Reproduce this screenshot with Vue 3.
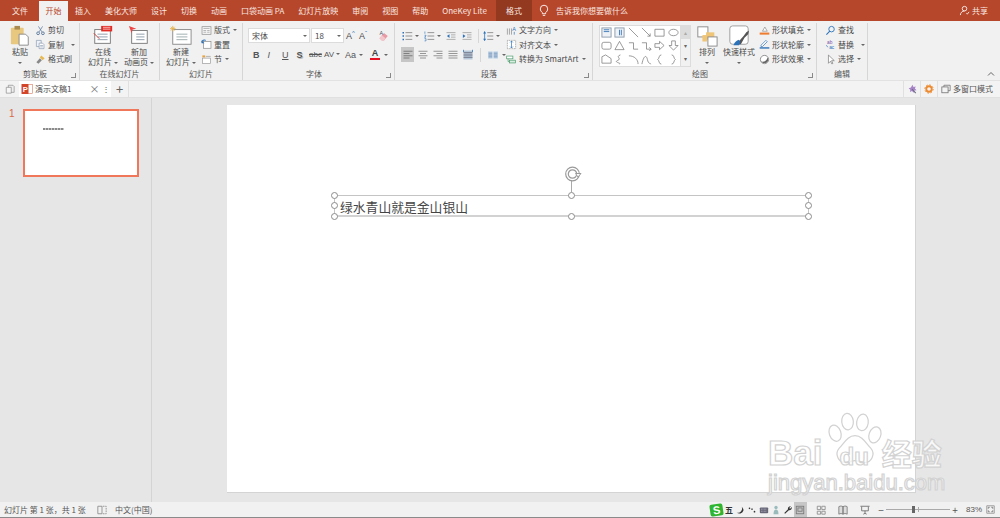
<template>
  <div class="app">
    <div class="titlebar">
      <div
        v-for="t in tabs"
        :key="t"
        class="tab"
        :class="{ active: t === '开始', context: t === '格式' }"
      >
        {{ t }}
      </div>
      <svg class="bulb" viewBox="0 0 12 16" v-html="icons.bulb"></svg>
      <div class="tell">告诉我你想要做什么</div>
      <div class="share">
        <svg viewBox="0 0 12 12" v-html="icons.user"></svg>
        共享
      </div>
    </div>

    <div class="ribbon">
      <div class="group" style="width: 80px">
        <div class="body pad-clip">
          <div class="big w22">
            <svg viewBox="0 0 24 24" v-html="icons.paste"></svg>
            <span>粘贴</span>
            <i class="caret"></i>
          </div>
          <div class="stack">
            <div v-for="r in clipRows" :key="r.t" class="row">
              <svg viewBox="0 0 16 16" v-html="icons[r.i]"></svg>{{ r.t }}
              <i v-if="r.c" class="caret" :class="r.far ? 'far' : 'near'"></i>
            </div>
          </div>
        </div>
        <div class="label off">剪贴板<i class="launcher"></i></div>
      </div>

      <div class="group" style="width: 80px">
        <div class="body pad-online">
          <div class="big w36">
            <svg viewBox="0 0 24 24" v-html="icons.online"></svg>
            <span>在线</span>
            <span>幻灯片 <i class="caret"></i></span>
          </div>
          <div class="big w36">
            <svg viewBox="0 0 24 24" v-html="icons.anim"></svg>
            <span>新加</span>
            <span>动画页 <i class="caret"></i></span>
          </div>
        </div>
        <div class="label">在线幻灯片</div>
      </div>

      <div class="group" style="width: 83px">
        <div class="body pad-slide">
          <div class="big w36">
            <svg viewBox="0 0 24 24" v-html="icons.newslide"></svg>
            <span>新建</span>
            <span>幻灯片 <i class="caret"></i></span>
          </div>
          <div class="stack">
            <div v-for="r in slideRows" :key="r.t" class="row">
              <svg viewBox="0 0 16 16" v-html="icons[r.i]"></svg>{{ r.t }}
              <i v-if="r.c" class="caret near"></i>
            </div>
          </div>
        </div>
        <div class="label">幻灯片</div>
      </div>

      <div class="group" style="width: 152px">
        <div class="body font-body">
          <div class="tools">
            <div class="combo wide">宋体<i class="caret"></i></div>
            <div class="combo narrow">18<i class="caret"></i></div>
            <span class="glyph grow">A<sup>^</sup></span>
            <span class="glyph shrink">A<sup>ˇ</sup></span>
            <svg class="clear" viewBox="0 0 16 16" v-html="icons.eraser"></svg>
          </div>
          <div class="tools fmt">
            <b>B</b>
            <em>I</em>
            <u>U</u>
            <b class="shadow">S</b>
            <s class="abc">abc</s>
            <span class="av">AV <i class="caret"></i></span>
            <span class="aa">Aa <i class="caret"></i></span>
            <span class="red">A</span><i class="caret"></i>
          </div>
        </div>
        <div class="label off">字体<i class="launcher"></i></div>
      </div>

      <div class="group" style="width: 198px">
        <div class="body para-body">
          <div class="para-left">
            <div class="tools para-top">
              <svg viewBox="0 0 16 16" v-html="icons.bullets"></svg><i class="caret"></i>
              <svg class="gap-l" viewBox="0 0 16 16" v-html="icons.numbers"></svg><i class="caret"></i>
              <svg class="gap-l" viewBox="0 0 16 16" v-html="icons.outdent"></svg>
              <svg class="gap-s" viewBox="0 0 16 16" v-html="icons.indent"></svg>
              <span class="vsep"></span>
              <svg viewBox="0 0 16 16" v-html="icons.spacing"></svg><i class="caret"></i>
            </div>
            <div class="tools para-bottom">
              <span class="on"><svg viewBox="0 0 16 16" v-html="icons.alignL"></svg></span>
              <svg viewBox="0 0 16 16" v-html="icons.alignC"></svg>
              <svg viewBox="0 0 16 16" v-html="icons.alignR"></svg>
              <svg viewBox="0 0 16 16" v-html="icons.alignJ"></svg>
              <svg viewBox="0 0 16 16" v-html="icons.alignD"></svg>
              <span class="vsep"></span>
              <svg viewBox="0 0 16 16" v-html="icons.columns"></svg><i class="caret"></i>
            </div>
          </div>
          <div class="stack">
            <div v-for="r in paraRows" :key="r.t" class="row">
              <svg viewBox="0 0 16 16" v-html="icons[r.i]"></svg>{{ r.t }}
              <i class="caret near"></i>
            </div>
          </div>
        </div>
        <div class="label off">段落<i class="launcher"></i></div>
      </div>

      <div class="group" style="width: 224px">
        <div class="body draw-body">
          <div class="gallery">
            <div class="cells">
              <svg v-for="(s, n) in shapes" :key="n" viewBox="0 0 12 12" v-html="s"></svg>
            </div>
            <div class="scroller">
              <span class="muted">▴</span>
              <span>▾</span>
              <span>▾</span>
            </div>
          </div>
          <div class="big w24">
            <svg viewBox="0 0 24 24" v-html="icons.arrange"></svg>
            <span>排列</span>
            <i class="caret"></i>
          </div>
          <div class="big w36">
            <svg viewBox="0 0 24 24" v-html="icons.quick"></svg>
            <span>快速样式</span>
            <i class="caret"></i>
          </div>
          <div class="stack">
            <div v-for="r in drawRows" :key="r.t" class="row">
              <svg viewBox="0 0 16 16" v-html="icons[r.i]"></svg>{{ r.t }}
              <i class="caret near"></i>
            </div>
          </div>
        </div>
        <div class="label off">绘图<i class="launcher"></i></div>
      </div>

      <div class="group" style="width: 51px">
        <div class="body pad-edit">
          <div class="stack">
            <div v-for="r in editRows" :key="r.t" class="row">
              <svg viewBox="0 0 16 16" v-html="icons[r.i]"></svg>{{ r.t }}
              <i v-if="r.c" class="caret" :class="r.far ? 'far' : 'near'"></i>
            </div>
          </div>
        </div>
        <div class="label">编辑</div>
      </div>

      <svg class="collapse" viewBox="0 0 10 6"><path d="M2 4.500 5 1.500 8 4.500" fill="none" stroke="#666" /></svg>
    </div>

    <div class="docbar">
      <svg class="docicon" viewBox="0 0 12 12" v-html="icons.docs"></svg>
      <div class="doctab">
        <svg class="ppt" viewBox="0 0 12 12">
          <rect x="4" y="1.500" width="7.500" height="9" fill="#fff" stroke="#d9775b" stroke-width=".6" />
          <rect x=".5" y="1" width="7" height="10" rx=".6" fill="#d2452a" />
          <text x="1.800" y="8.600" font-size="7.500" font-weight="700" fill="#fff" font-family="Liberation Sans, sans-serif">P</text>
        </svg>
        <span class="docname">演示文稿1</span>
        <span class="x">×</span>
        <span class="dots">⋮</span>
      </div>
      <span class="plus">+</span>
      <span class="vline"></span>
      <div class="docright">
        <span class="vline"></span>
        <svg viewBox="0 0 12 12" v-html="icons.wand"></svg>
        <span class="vline"></span>
        <svg viewBox="0 0 12 12" v-html="icons.gear"></svg>
        <span class="vline"></span>
        <svg viewBox="0 0 12 12" v-html="icons.windows"></svg>
        <span class="multi">多窗口模式</span>
      </div>
    </div>

    <div class="main">
      <div class="panel">
        <span class="num">1</span>
        <div class="thumb"><span class="thumb-text"></span></div>
      </div>
      <div class="work">
        <div class="slide">
          <div class="textbox">
            <span class="tb-text">绿水青山就是金山银山</span>
            <i v-for="h in handles" :key="h" class="handle" :class="h"></i>
            <i class="stem"></i>
            <svg class="rotate" viewBox="0 0 18 18">
              <circle cx="8.500" cy="9" r="6.800" fill="none" stroke="#9a9a9a" stroke-width="1.200" />
              <circle cx="8.500" cy="9" r="4.200" fill="none" stroke="#9a9a9a" stroke-width="1.200" />
              <path d="M11.500 8.500 17 8.500 14 12Z" fill="#fff" stroke="#9a9a9a" stroke-width="1" />
            </svg>
          </div>
        </div>
      </div>
    </div>

    <div class="status">
      <span class="s-pages">幻灯片 第 1 张，共 1 张</span>
      <svg class="s-notes" viewBox="0 0 12 12" v-html="icons.notes"></svg>
      <span>中文(中国)</span>
      <div class="s-right">
        <div class="ime">
          <span class="sogou">S</span>
          <span class="wu">五</span>
          <svg viewBox="0 0 12 12"><path d="M8 2a5 5 0 0 1-6 7 5 5 0 0 0 8-2 5 5 0 0 0-2-5Z" fill="#333" /></svg>
          <svg viewBox="0 0 12 12"><circle cx="3" cy="4" r="1" fill="#333" /><circle cx="6" cy="5" r="1" fill="#555" /><circle cx="9" cy="8" r="1" fill="#333" /></svg>
          <svg viewBox="0 0 12 12"><rect x="1" y="3" width="10" height="7" rx="1" fill="#667" /><path d="M2.500 5h7M2.500 7.500h7" stroke="#ccd" stroke-width=".8" stroke-dasharray="1 .7" /></svg>
          <svg viewBox="0 0 12 12"><circle cx="6" cy="3" r="2" fill="#9bb" /><path d="M3 11c0-4 1.500-5.500 3-5.500S9 7 9 11Z" fill="#9bb" /></svg>
          <svg viewBox="0 0 12 12"><path d="M10.500 2.500 8.500 4.500 7.500 3.500 9.500 1.500A3 3 0 0 0 6 5.200L1.500 9.500 2.500 10.500 7 6.200A3 3 0 0 0 10.500 2.500Z" fill="#333" /></svg>
        </div>
        <span class="view on"><svg viewBox="0 0 12 12" v-html="icons.vNormal"></svg></span>
        <span class="view"><svg viewBox="0 0 12 12" v-html="icons.vGrid"></svg></span>
        <span class="view"><svg viewBox="0 0 12 12" v-html="icons.vRead"></svg></span>
        <span class="view last"><svg viewBox="0 0 12 12" v-html="icons.vShow"></svg></span>
        <span class="zoombtn">−</span>
        <div class="slider"><i class="mid"></i><i class="knob"></i></div>
        <span class="zoombtn">+</span>
        <span class="pct">83%</span>
        <svg class="fit" viewBox="0 0 12 12" v-html="icons.fit"></svg>
      </div>
    </div>

    <div class="watermark">
      <svg class="paw" viewBox="0 0 70 66">
        <g fill="rgba(255,255,255,.35)" stroke="#d2d2d2" stroke-width="1.500">
          <ellipse cx="11" cy="26" rx="7" ry="10" transform="rotate(-20 11 26)" />
          <ellipse cx="26" cy="12" rx="7" ry="10" transform="rotate(-6 26 12)" />
          <ellipse cx="44" cy="13" rx="7" ry="10" transform="rotate(8 44 13)" />
          <ellipse cx="59" cy="28" rx="7" ry="10" transform="rotate(20 59 28)" />
          <path d="M35 29c9 0 13 9 19 15 6 7 1 18-8 17-4 0-7-2-11-2s-7 2-11 2c-9 1-14-10-8-17 6-6 10-15 19-15Z" />
        </g>
      </svg>
      <div class="wm-logo">
        <span>Bai</span><span class="du">du</span><span class="jy">经验</span>
      </div>
      <div class="wm-url">jingyan.baidu.com</div>
    </div>
  </div>
</template>

<script setup>
const tabs = [
  "文件",
  "开始",
  "插入",
  "美化大师",
  "设计",
  "切换",
  "动画",
  "口袋动画 PA",
  "幻灯片放映",
  "审阅",
  "视图",
  "帮助",
  "OneKey Lite",
  "格式",
];

const clipRows = [
  { i: "cut", t: "剪切" },
  { i: "copy", t: "复制", c: true, far: true },
  { i: "brush", t: "格式刷" },
];
const slideRows = [
  { i: "layout", t: "版式", c: true },
  { i: "reset", t: "重置" },
  { i: "section", t: "节", c: true },
];
const paraRows = [
  { i: "textdir", t: "文字方向" },
  { i: "textalign", t: "对齐文本" },
  { i: "smartart", t: "转换为 SmartArt" },
];
const drawRows = [
  { i: "fill", t: "形状填充" },
  { i: "outline", t: "形状轮廓" },
  { i: "effect", t: "形状效果" },
];
const editRows = [
  { i: "find", t: "查找" },
  { i: "replace", t: "替换", c: true, far: true },
  { i: "select", t: "选择", c: true },
];

const handles = ["tl", "tm", "tr", "ml", "mr", "bl", "bm", "br"];

const line = (d, c = "#666", w = 1) =>
  `<path d="${d}" fill="none" stroke="${c}" stroke-width="${w}"/>`;

const icons = {
  bulb: line("M4 12V10.500C2.500 9.500 1.500 8 1.500 6a4.500 4.500 0 0 1 9 0c0 2-1 3.500-2.500 4.500V12ZM4.500 14h3", "#fff", 1.1),
  user: line("M6 6.500a2.500 2.500 0 1 0 0-5 2.500 2.500 0 0 0 0 5ZM1.500 11c0-2.500 2-4.500 4.500-4.500M8 9l1 1 2-2.500", "#fff", 0.9),
  paste:
    '<rect x="2" y="3" width="14" height="18" rx="1" fill="#e8c77e"/><rect x="6" y="1" width="6" height="4" fill="#a98b52"/><path d="M11 10h7l3 3v9H11Z" fill="#fff" stroke="#888"/>',
  cut: line("M5 2 10 10M11 2 6 10", "#6a86a8", 1.2) + '<circle cx="4.500" cy="12" r="2" fill="none" stroke="#4a6a90" stroke-width="1.200"/><circle cx="11.500" cy="12" r="2" fill="none" stroke="#4a6a90" stroke-width="1.200"/>',
  copy: '<path d="M2 2h7v9H2Z" fill="#eef1f5" stroke="#8a9ab0"/><path d="M6 6h5l2 2v6H6Z" fill="#fff" stroke="#8a9ab0"/><path d="M7.500 9.500h4M7.500 11.500h4" stroke="#8a9ab0"/>',
  brush: '<path d="M9 2 14 6 11 9 7 5Z" fill="#e9b94e"/><path d="M7 6 10 9 5 14 2 12Z" fill="#888"/>',
  online:
    '<rect x="3" y="5" width="17" height="15" fill="#fff" stroke="#777"/><rect x="10" y="1" width="12" height="6" fill="#e02a24"/><path d="M6 10h11M6 13h11M6 16h11" stroke="#8a98a8"/><path d="M12 2.500h8M12 4.500h8" stroke="#fff" stroke-width=".7"/><path d="M2 9 8 15" stroke="#c33"/>',
  anim:
    '<rect x="4" y="6" width="17" height="14" fill="#fff" stroke="#777"/><path d="M9 10h9M9 13h9M9 16h9" stroke="#8a98a8"/><path d="M1 1 9 4 5 5 4 9Z" fill="#e44"/>',
  newslide:
    '<rect x="3" y="5" width="20" height="16" fill="#fff" stroke="#888"/><path d="M7 10h12M7 13h12M7 16h12" stroke="#9aa"/><path d="M3 1v6M0 4h6M1 2l4 4M5 2l-4 4" stroke="#e6b450"/>',
  layout: '<rect x="1.500" y="2.500" width="13" height="11" fill="#f7f7f7" stroke="#888"/><path d="M3.500 5h9M3.500 8h4M9 8h3.500M3.500 10.500h4M9 10.500h3.500" stroke="#999"/>',
  reset: '<rect x="3.500" y="3.500" width="11" height="10" fill="#fff" stroke="#888"/><path d="M1 5a4 4 0 0 1 6-3" fill="none" stroke="#2c72b8" stroke-width="1.500"/><path d="M1 2v4h4Z" fill="#2c72b8"/>',
  section: '<rect x="2" y="2" width="4" height="3" fill="#e8a33e"/><rect x="2" y="6" width="12" height="8" fill="#fff" stroke="#999"/><path d="M7 3.500h7" stroke="#999"/>',
  eraser: '<path d="M2 11 8 4l5 4-5 6H5Z" fill="#e79aa4"/><path d="M2 11 5 7l5 4-2 3H5Z" fill="#f3c6cc"/><text x="2" y="7" font-size="7" fill="#456" font-family="Liberation Sans">A</text>',
  bullets: line("M6 3.500h9M6 8h9M6 12.500h9", "#777") + '<path d="M2 2.500h2v2H2ZM2 7h2v2H2ZM2 11.500h2v2H2Z" fill="#2c72b8"/>',
  numbers: line("M6 3.500h9M6 8h9M6 12.500h9", "#777") + '<path d="M2.500 2v3M2 7h2v1L2 9.500h2M2 11.500h2v3H2" stroke="#2c72b8" fill="none" stroke-width=".8"/>',
  outdent: line("M2 3.500h12M8 6.500h6M8 9.500h6M2 12.500h12", "#999") + '<path d="M6 5.500v5L2.500 8Z" fill="#2c72b8"/>',
  indent: line("M2 3.500h12M8 6.500h6M8 9.500h6M2 12.500h12", "#999") + '<path d="M2.500 5.500v5L6 8Z" fill="#2c72b8"/>',
  spacing: line("M7 3.500h8M7 8h8M7 12.500h8", "#777") + '<path d="M3.500 2v12" stroke="#2c72b8"/><path d="M1.500 4.500 3.500 1.500 5.500 4.500ZM1.500 11.500 3.500 14.500 5.500 11.500Z" fill="#2c72b8"/>',
  alignL: line("M2 3h12M2 6h8M2 9h12M2 12h8", "#666"),
  alignC: line("M2 3h12M4 6h8M2 9h12M4 12h8", "#777"),
  alignR: line("M2 3h12M6 6h8M2 9h12M6 12h8", "#777"),
  alignJ: line("M2 3h12M2 6h12M2 9h12M2 12h12", "#777"),
  alignD: '<rect x="2" y="2" width="12" height="12" fill="#b7c8da"/>' + line("M2 5h12M2 8h12M2 11h12", "#556") + '<path d="M2 1v3M14 1v3" stroke="#2c72b8"/>',
  columns: '<rect x="1.500" y="3" width="6" height="10" fill="#c8d8ea"/><rect x="8.500" y="3" width="6" height="10" fill="#c8d8ea"/>' + line("M2 5.500h5M2 8h5M2 10.500h5M9 5.500h5M9 8h5M9 10.500h5", "#5a7fa8"),
  textdir: line("M2 5v9M5 5v9M8 5v9", "#888") + '<text x="9" y="9" font-size="8" fill="#2c72b8" font-family="Liberation Sans">A</text><path d="M12 10v4" stroke="#2c72b8"/>',
  textalign: '<path d="M2 2h12v12H2Z" fill="#fff" stroke="#888" stroke-dasharray="1.500 1"/><path d="M8 3v10" stroke="#2c72b8"/><path d="M6 5 8 3 10 5M6 11 8 13 10 11" fill="none" stroke="#2c72b8"/>',
  smartart: '<rect x="1" y="3" width="9" height="4" fill="#fff" stroke="#4a9a6a"/><rect x="5" y="9" width="9" height="4" fill="#d8ecdf" stroke="#4a9a6a"/><path d="M3 7v4h2" fill="none" stroke="#4a9a6a"/>',
  arrange: '<rect x="2" y="2" width="11" height="11" fill="#fff" stroke="#888"/><rect x="11" y="8" width="9" height="8" fill="#eec577"/><rect x="7" y="11" width="5" height="7" fill="#eec577"/><rect x="13" y="13" width="10" height="10" fill="#fff" stroke="#888"/>',
  quick: '<rect x="2" y="1" width="20" height="20" rx="3" fill="#fff" stroke="#999"/><path d="M9 21 17 12l3-4 3-2-1 4-4 4-4 7Z" fill="#555"/><path d="M6 22c1-3 3-5 6-6 2 2 1 4 0 6Z" fill="#2c72b8"/>',
  fill: '<path d="M5 9 8.500 3 12 9Z" fill="#fff" stroke="#888"/><rect x="1" y="11" width="14" height="3" fill="#ee7d31"/>',
  outline: '<path d="M3 9 10 2l2 2-7 7H3Z" fill="#fff" stroke="#2c72b8"/><rect x="1" y="12" width="14" height="2" fill="#2c72b8"/>',
  effect: '<circle cx="8" cy="8" r="6" fill="#fff" stroke="#666"/><path d="M3 11c2 3 8 3 10-1 1-2 0-4-1-5 0 4-4 7-9 6Z" fill="#666"/>',
  find: '<circle cx="9.500" cy="6" r="4" fill="none" stroke="#2c72b8" stroke-width="1.300"/><path d="M7 9 2 14" stroke="#2c72b8" stroke-width="1.500"/>',
  replace: '<text x="3" y="7" font-size="7" fill="#7a4fa8" font-family="Liberation Sans">ab</text><text x="6" y="14" font-size="7" fill="#2c72b8" font-family="Liberation Sans">ac</text><path d="M2 9 4 12" stroke="#2c72b8"/>',
  select: '<path d="M5 1.500v12l3-3 2 4 1.500-.8-2-4h4Z" fill="#fff" stroke="#777"/>',
  docs: '<path d="M4 1.500h5.500l1.500 1.500v7H4Z" fill="#eee" stroke="#888" stroke-width=".8"/><path d="M1.500 4h6v7h-6Z" fill="#f7f7f7" stroke="#888" stroke-width=".8"/>',
  wand: '<path d="M6.500 1 7.800 3.500 10.500 3 9.500 5.500 11.500 7.500 8.800 7.800 8 10.500 6 8.500 3.500 9.500 4 6.800 2 5 4.700 4.300Z" fill="#a884c8"/><path d="M6 6 10.500 11" stroke="#6a6a80" stroke-width="1.300"/>',
  gear: '<circle cx="6" cy="6" r="3.300" fill="none" stroke="#ec8a2f" stroke-width="2.200"/><circle cx="6" cy="6" r="5" fill="none" stroke="#ec8a2f" stroke-width="1.200" stroke-dasharray="1.800 2.100"/>',
  windows: '<rect x="1" y="3.500" width="7.500" height="7" fill="none" stroke="#777"/><path d="M3.500 3.500V1.500h7.500v6.500H8.500" fill="none" stroke="#777"/>',
  notes: '<path d="M1 1.500h5v9H1Z" fill="none" stroke="#888"/><path d="M7 1.500h4v9H7" fill="none" stroke="#888" stroke-dasharray="2 1"/>',
  vNormal: '<rect x="1.500" y="1.500" width="9" height="9" fill="none" stroke="#777"/><rect x="3.500" y="3.500" width="5" height="4" fill="none" stroke="#777"/>',
  vGrid: '<path d="M1.500 1.500h4v4h-4ZM7 1.500h4v4H7ZM1.500 7.500h4v3.500h-4ZM7 7.500h4v3.500H7Z" fill="none" stroke="#888"/>',
  vRead: '<path d="M1 2c2-1 3-1 5 0v9c-2-1-3-1-5 0ZM6 2c2-1 3-1 5 0v9c-2-1-3-1-5 0Z" fill="#ddd" stroke="#777"/>',
  vShow: '<path d="M.5 1.500h11M2 2v5h8V2M6 7v3M4 11l2-1 2 1" fill="none" stroke="#666"/>',
  fit: '<path d="M1 1h10v10H1Z" fill="none" stroke="#888"/><path d="M3 5V3h2M7 3h2v2M9 7v2H7M5 9H3V7" fill="none" stroke="#666"/>',
};

const shapes = [
  '<rect x="1" y="1" width="10" height="10" fill="#eef2f7" stroke="#8a9aaa"/><path d="M3 3h6M3 5h6" stroke="#3a78b8"/>',
  '<rect x="1" y="1" width="10" height="10" fill="#eef2f7" stroke="#8a9aaa"/><path d="M8 3v6M6 3v6" stroke="#3a78b8"/>',
  line("M1 1 11 11", "#777", 0.8),
  line("M1 1 10 10M10 7v3H7", "#777", 0.8),
  line("M1 2.500h10v7.500H1Z", "#777", 0.8),
  line("M6 2.500c3 0 5 1.500 5 3.500s-2 3.500-5 3.500S1 8 1 6s2-3.500 5-3.500Z", "#777", 0.8),
  '<rect x="1" y="2.500" width="10" height="7.500" rx="2" fill="none" stroke="#777" stroke-width=".8"/>',
  line("M6 1.500 11 10.500H1Z", "#777", 0.8),
  line("M1 3H6V10H11", "#777", 0.8),
  line("M1 3H6V10H11M9 8l2 2-2 2", "#777", 0.8),
  line("M1 4H6V1.500L11 6 6 10.500V8H1Z", "#777", 0.8),
  line("M4 1H8V6H11L6 11 1 6H4Z", "#777", 0.8),
  line("M1 10V3L5 1 11 5V10Z", "#777", 0.8),
  line("M7 1C1 3 9 5 4 7S9 10 6 11", "#777", 0.8),
  line("M1 2C7 2 11 6 11 11", "#777", 0.8),
  line("M1 11C3 1 6 1 7 6S10 10 11 11", "#777", 0.8),
  line("M8 1C5 1 6 5 4 6 6 7 5 11 8 11", "#777", 0.8),
  line("M4 1C7 1 6 5 8 6 6 7 7 11 4 11", "#777", 0.8),
];
</script>

<style>
html,
body {
  margin: 0;
  padding: 0;
  overflow: hidden;
}
</style>

<style scoped>
.app {
  position: relative;
  width: 1000px;
  height: 518px;
  display: flex;
  flex-direction: column;
  overflow: hidden;
  background: #e6e6e6;
  color: #4a4a4a;
  font-family: "Noto Sans CJK SC", "Liberation Sans", sans-serif;
  font-size: 8px;
  line-height: 10px;
}

svg {
  display: block;
  flex: none;
}

.titlebar {
  height: 21px;
  flex: none;
  display: flex;
  align-items: stretch;
  padding-left: 5px;
  background: #b7472a;
  color: #f8e8e2;
}

.tab {
  display: flex;
  align-items: center;
  padding: 0 7px;
  white-space: nowrap;
}

.tab.active {
  margin: 1px 0 0 4px;
  padding: 0 6.500px;
  background: #f1f1f1;
  color: #b7472a;
}

.tab.context {
  margin-left: 2px;
  padding: 0 10px;
  background: #93391f;
}

.bulb {
  width: 10px;
  height: 13px;
  margin: 4px 7px 0 7px;
}

.tell {
  align-self: center;
}

.share {
  margin: 0 12px 0 auto;
  display: flex;
  align-items: center;
  gap: 2px;
}

.share svg {
  width: 11px;
  height: 11px;
}

.ribbon {
  position: relative;
  height: 59px;
  flex: none;
  display: flex;
  background: #f1f1f1;
  border-bottom: 1px solid #e2e2e2;
}

.group {
  flex: none;
  display: flex;
  flex-direction: column;
  box-sizing: border-box;
  margin: 2px 0 0;
  border-right: 1px solid #d6d6d6;
}

.body {
  flex: 1;
  display: flex;
  min-height: 0;
}

.label {
  position: relative;
  height: 11px;
  text-align: center;
  color: #555;
}

.label.off {
  padding-right: 9px;
}

.launcher {
  position: absolute;
  right: 3px;
  bottom: 2px;
  width: 4px;
  height: 4px;
  border-right: 1px solid #888;
  border-bottom: 1px solid #888;
}

.big {
  flex: none;
  display: flex;
  flex-direction: column;
  align-items: center;
  white-space: nowrap;
}

.big svg {
  width: 22px;
  height: 22px;
}

.w22 {
  width: 22px;
}

.w24 {
  width: 24px;
}

.w36 {
  width: 36px;
}

.caret {
  display: inline-block;
  width: 0;
  height: 0;
  border: 2px solid transparent;
  border-top: 2px solid #666;
  border-bottom: 0;
  vertical-align: middle;
}

.big > .caret {
  margin-top: 5px;
}

.near {
  margin-left: 1px;
}

.far {
  margin-left: 5px;
}

.stack {
  display: flex;
  flex-direction: column;
}

.row {
  height: 14.500px;
  display: flex;
  align-items: center;
  gap: 2px;
  white-space: nowrap;
}

.row svg {
  width: 11px;
  height: 11px;
}

.pad-clip {
  padding: 2px 0 0 9px;
  gap: 4px;
}

.pad-clip .stack {
  margin-top: -2px;
}

.pad-online {
  padding: 2px 0 0 5px;
}

.pad-slide {
  padding: 2px 0 0 3px;
  gap: 2px;
}

.pad-slide .stack {
  margin-top: -2px;
}

.font-body {
  flex-direction: column;
  padding: 5px 0 0 5px;
  gap: 4px;
}

.tools {
  display: flex;
  align-items: center;
  height: 15px;
}

.combo {
  position: relative;
  box-sizing: border-box;
  height: 15px;
  display: flex;
  align-items: center;
  padding-left: 3px;
  background: #fff;
  border: 1px solid #dcdcdc;
}

.combo .caret {
  position: absolute;
  right: 2px;
  top: 6px;
}

.wide {
  width: 62px;
}

.narrow {
  width: 33px;
  margin-left: 1px;
}

.glyph {
  font-family: "Liberation Sans", sans-serif;
  font-size: 9px;
}

.glyph sup {
  font-size: 6px;
  line-height: 0;
  color: #2c72b8;
}

.grow {
  margin-left: 2px;
  width: 13px;
}

.shrink {
  width: 13px;
}

.clear {
  width: 13px;
  height: 13px;
  margin-left: 6px;
}

.fmt {
  padding-left: 5px;
  font-family: "Liberation Sans", sans-serif;
  font-size: 9px;
  color: #555;
}

.fmt b,
.fmt em,
.fmt u {
  width: 14.500px;
}

.fmt b.shadow {
  width: 12.500px;
  text-shadow: 1px 1px 0 #bbb;
}

.abc {
  width: 15px;
  font-size: 8px;
}

.av {
  width: 21px;
  font-size: 8px;
}

.aa {
  width: 25px;
}

.red {
  width: 10px;
  margin-right: 4px;
  text-align: center;
  color: #444;
  font-weight: 700;
  border-bottom: 2px solid #e81123;
  line-height: 9px;
}

.para-body {
  padding-left: 6px;
}

.para-left {
  width: 105px;
  display: flex;
  flex-direction: column;
  gap: 4px;
  padding-top: 5px;
}

.tools svg {
  width: 12px;
  height: 12px;
}

.para-top svg {
  margin-right: 2px;
}

.para-top .gap-l {
  margin-left: 4px;
}

.para-top .gap-s {
  margin-left: 2px;
}

.vsep {
  width: 1px;
  height: 14px;
  margin: 0 3px;
  background: #d6d6d6;
}

.para-bottom {
  gap: 3px;
}

.para-bottom .on {
  display: flex;
  align-items: center;
  justify-content: center;
  width: 15px;
  height: 15px;
  background: #c6c6c6;
}

.draw-body {
  padding: 2px 0 0 6px;
  gap: 2px;
}

.draw-body .stack {
  margin-top: -2px;
}

.gallery {
  display: flex;
  width: 92px;
  height: 42px;
  margin-right: 2px;
  background: #fff;
  box-sizing: border-box;
  border: 1px solid #dcdcdc;
}

.cells {
  flex: 1;
  display: grid;
  grid-template-columns: repeat(6, 1fr);
  grid-auto-rows: 13.300px;
  justify-items: center;
  align-items: center;
}

.cells svg {
  width: 11px;
  height: 11px;
}

.scroller {
  width: 9px;
  display: flex;
  flex-direction: column;
  background: #f1f1f1;
  border-left: 1px solid #dcdcdc;
}

.scroller span {
  flex: 1;
  display: flex;
  align-items: center;
  justify-content: center;
  font-size: 6px;
  color: #666;
}

.scroller .muted {
  background: #dcdcdc;
  color: #aaa;
}

.pad-edit {
  padding-left: 8px;
}

.collapse {
  position: absolute;
  right: 4px;
  bottom: 3px;
  width: 10px;
  height: 6px;
}

.docbar {
  height: 17px;
  flex: none;
  display: flex;
  align-items: stretch;
  box-sizing: border-box;
  padding-left: 5px;
  background: #f3f3f3;
  border-bottom: 1px solid #e0e0e0;
}

.docicon {
  width: 10px;
  height: 10px;
  margin: 3px 4px 0 0;
}

.doctab {
  flex: none;
  width: 92px;
  display: flex;
  align-items: center;
  box-sizing: border-box;
  padding-left: 2px;
  background: #fff;
}

.ppt {
  width: 12px;
  height: 12px;
  margin-right: 2px;
}

.docname {
  flex: none;
  white-space: nowrap;
}

.x {
  margin-left: 18px;
  font-size: 10px;
  color: #777;
}

.dots {
  margin-left: 3px;
  color: #555;
}

.plus {
  width: 17px;
  text-align: center;
  font-size: 13px;
  line-height: 15px;
  color: #666;
}

.vline {
  width: 1px;
  background: #e0e0e0;
  flex: none;
}

.docright {
  margin-left: auto;
  display: flex;
  align-items: center;
  gap: 3px;
  padding-right: 7px;
  color: #555;
}

.docright .vline {
  align-self: stretch;
}

.docright svg {
  width: 10px;
  height: 10px;
}

.multi {
  margin-left: -1px;
}

.main {
  flex: 1;
  min-height: 0;
  display: flex;
}

.panel {
  width: 152px;
  flex: none;
  box-sizing: border-box;
  display: flex;
  align-items: flex-start;
  padding: 11px 0 0 9px;
  border-right: 1px solid #d4d4d4;
}

.num {
  width: 14px;
  font-family: "Liberation Sans", sans-serif;
  font-size: 10px;
  color: #d9694a;
}

.thumb {
  width: 116px;
  height: 68px;
  box-sizing: border-box;
  background: #fff;
  border: 2px solid #f1775a;
}

.thumb-text {
  display: block;
  width: 21px;
  height: 1.500px;
  margin: 17px 0 0 18px;
  background: repeating-linear-gradient(90deg, #8a8a8a 0 2px, #c8c8c8 2px 3px);
}

.work {
  flex: 1;
  padding: 7px 0 0 75px;
}

.slide {
  position: relative;
  width: 688px;
  height: 387px;
  background: #fff;
  border-right: 1px solid #d4d4d4;
  border-bottom: 1px solid #d4d4d4;
}

.textbox {
  position: absolute;
  left: 107px;
  top: 90px;
  width: 475px;
  height: 22px;
  box-sizing: border-box;
  border: 1px solid #c4c4c4;
  border-bottom-width: 2px;
  border-bottom-color: #d2d2d2;
}

.tb-text {
  position: absolute;
  left: 5px;
  top: 2px;
  font-size: 12.800px;
  line-height: 18px;
  white-space: nowrap;
  color: #444;
}

.handle {
  position: absolute;
  width: 7px;
  height: 7px;
  box-sizing: border-box;
  border-radius: 50%;
  background: #fff;
  border: 1px solid #8c8c8c;
}

.tl { left: -4px; top: -4px; }
.tm { left: 233px; top: -4px; }
.tr { right: -4px; top: -4px; }
.ml { left: -4px; top: 6px; }
.mr { right: -4px; top: 6px; }
.bl { left: -4px; bottom: -5px; }
.bm { left: 233px; bottom: -5px; }
.br { right: -4px; bottom: -5px; }

.stem {
  position: absolute;
  left: 236px;
  top: -15px;
  width: 1px;
  height: 12px;
  background: #aaa;
}

.rotate {
  position: absolute;
  left: 229px;
  top: -31px;
  width: 18px;
  height: 18px;
}

.status {
  height: 16px;
  flex: none;
  display: flex;
  align-items: center;
  box-sizing: border-box;
  padding-left: 4px;
  background: #f1f1f1;
  border-bottom: 1px solid #8a8a8a;
  color: #555;
}

.s-pages {
  width: 93px;
}

.s-notes {
  width: 10px;
  height: 10px;
  margin-right: 8px;
}

.s-right {
  margin-left: auto;
  display: flex;
  align-items: center;
  height: 15px;
}

.ime {
  display: flex;
  align-items: center;
  gap: 2px;
}

.ime svg {
  width: 10px;
  height: 10px;
}

.sogou {
  width: 13px;
  height: 12px;
  border-radius: 2px;
  background: #2fb52f;
  color: #fff;
  font: 700 11px/12px "Liberation Sans", sans-serif;
  text-align: center;
  transform: rotate(-8deg);
}

.wu {
  font-weight: 700;
  color: #333;
}

.view {
  width: 13px;
  height: 15px;
  display: flex;
  align-items: center;
  justify-content: center;
  margin-right: 9px;
}

.view.on {
  background: #c6c6c6;
  margin-left: 1px;
  margin-right: 8px;
}

.view.last {
  margin-right: 5px;
}

.view svg {
  width: 10px;
  height: 10px;
}

.zoombtn {
  width: 8px;
  text-align: center;
  font-size: 10px;
  color: #555;
}

.slider {
  position: relative;
  width: 64px;
  height: 1px;
  margin: 0 1px;
  background: #aaa;
}

.mid {
  position: absolute;
  left: 32px;
  top: -2px;
  width: 1px;
  height: 5px;
  background: #aaa;
}

.knob {
  position: absolute;
  left: 26px;
  top: -3px;
  width: 3px;
  height: 7px;
  background: #666;
}

.pct {
  margin-left: 7px;
  font-family: "Liberation Sans", sans-serif;
  font-size: 8px;
}

.fit {
  width: 9px;
  height: 9px;
  margin: 0 5px 0 4px;
}

.watermark {
  position: absolute;
  left: 765px;
  top: 410px;
  width: 190px;
  height: 90px;
  pointer-events: none;
}

.paw {
  position: absolute;
  left: 61px;
  top: 1px;
  width: 58px;
  height: 56px;
}

.wm-logo {
  position: absolute;
  left: 3px;
  top: 24px;
  display: flex;
  align-items: baseline;
  font: 700 35px/36px "Liberation Sans", sans-serif;
  color: rgba(255, 255, 255, 0.75);
  -webkit-text-stroke: 1.200px #d2d2d2;
  white-space: nowrap;
}

.du {
  margin-left: 17px;
  font-size: 24px;
}

.jy {
  margin-left: 13px;
  font: 700 30px/36px "Noto Sans CJK SC", sans-serif;
}

.wm-url {
  position: absolute;
  left: 3px;
  top: 61px;
  font: 400 22px/24px "Liberation Sans", sans-serif;
  color: rgba(255, 255, 255, 0.75);
  -webkit-text-stroke: 1.200px #d2d2d2;
  white-space: nowrap;
}
</style>
